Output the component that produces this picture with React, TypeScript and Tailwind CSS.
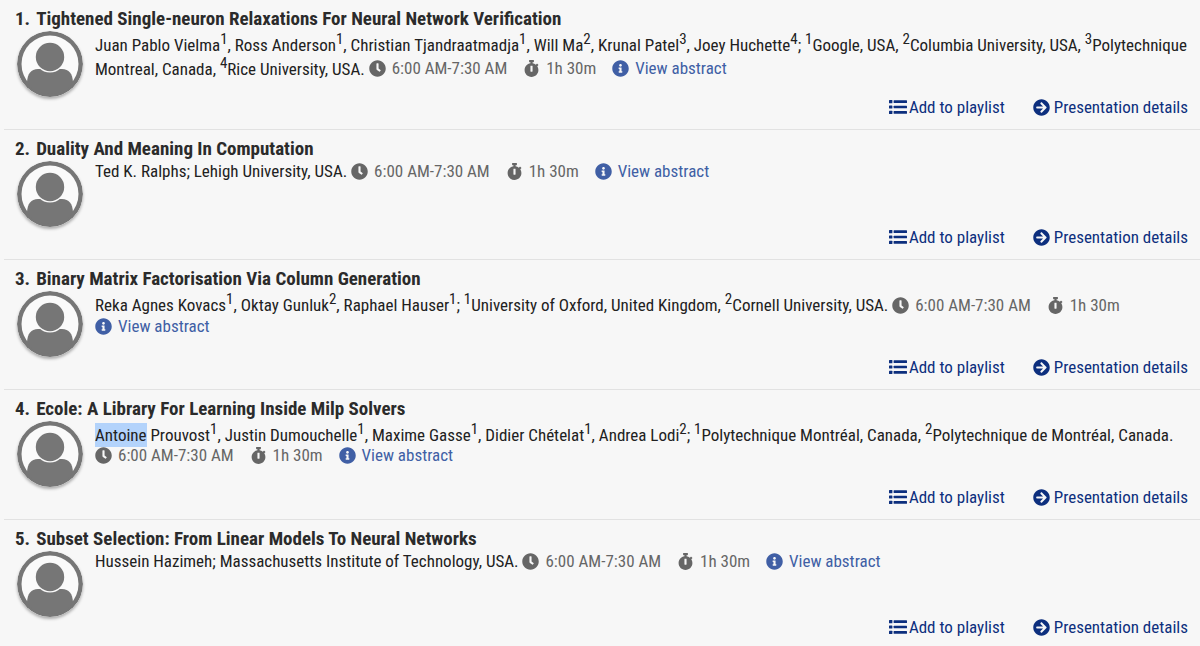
import React, { Fragment } from "react";
import {
  FaArrowCircleRight,
  FaClock,
  FaInfoCircle,
  FaStopwatch,
} from "react-icons/fa";

interface Entry {
  name: string;
  marker?: number;
}

interface Presentation {
  title: string;
  authors: Entry[];
  affiliations: Entry[];
  highlight?: string;
}

const presentations: Presentation[] = [
  {
    title: "Tightened Single-neuron Relaxations For Neural Network Verification",
    authors: [
      { name: "Juan Pablo Vielma", marker: 1 },
      { name: "Ross Anderson", marker: 1 },
      { name: "Christian Tjandraatmadja", marker: 1 },
      { name: "Will Ma", marker: 2 },
      { name: "Krunal Patel", marker: 3 },
      { name: "Joey Huchette", marker: 4 },
    ],
    affiliations: [
      { name: "Google, USA", marker: 1 },
      { name: "Columbia University, USA", marker: 2 },
      { name: "Polytechnique Montreal, Canada", marker: 3 },
      { name: "Rice University, USA", marker: 4 },
    ],
  },
  {
    title: "Duality And Meaning In Computation",
    authors: [{ name: "Ted K. Ralphs" }],
    affiliations: [{ name: "Lehigh University, USA" }],
  },
  {
    title: "Binary Matrix Factorisation Via Column Generation",
    authors: [
      { name: "Reka Agnes Kovacs", marker: 1 },
      { name: "Oktay Gunluk", marker: 2 },
      { name: "Raphael Hauser", marker: 1 },
    ],
    affiliations: [
      { name: "University of Oxford, United Kingdom", marker: 1 },
      { name: "Cornell University, USA", marker: 2 },
    ],
  },
  {
    title: "Ecole: A Library For Learning Inside Milp Solvers",
    highlight: "Antoine",
    authors: [
      { name: "Antoine Prouvost", marker: 1 },
      { name: "Justin Dumouchelle", marker: 1 },
      { name: "Maxime Gasse", marker: 1 },
      { name: "Didier Chételat", marker: 1 },
      { name: "Andrea Lodi", marker: 2 },
    ],
    affiliations: [
      { name: "Polytechnique Montréal, Canada", marker: 1 },
      { name: "Polytechnique de Montréal, Canada", marker: 2 },
    ],
  },
  {
    title: "Subset Selection: From Linear Models To Neural Networks",
    authors: [{ name: "Hussein Hazimeh" }],
    affiliations: [{ name: "Massachusetts Institute of Technology, USA" }],
  },
];

const Marker = ({ value }: { value?: number }) =>
  value ? (
    <sup className="static align-super text-[15px] leading-4">{value}</sup>
  ) : null;

const Name = ({ name, highlight }: { name: string; highlight?: string }) => {
  if (!highlight || !name.startsWith(highlight)) return <>{name}</>;
  return (
    <>
      <mark className="bg-[#b3d3fb] py-0.5 text-inherit">{highlight}</mark>
      {name.slice(highlight.length)}
    </>
  );
};

const ListIcon = () => (
  <svg viewBox="0 0 18 18" className="h-[18px] w-[18px]" fill="currentColor">
    <rect x="0" y="2" width="3.4" height="3.2" rx="0.5" />
    <rect x="0" y="7.4" width="3.4" height="3.2" rx="0.5" />
    <rect x="0" y="12.8" width="3.4" height="3.2" rx="0.5" />
    <rect x="4.6" y="2.3" width="13.4" height="2.6" rx="0.5" />
    <rect x="4.6" y="7.7" width="13.4" height="2.6" rx="0.5" />
    <rect x="4.6" y="13.1" width="13.4" height="2.6" rx="0.5" />
  </svg>
);

const Avatar = () => (
  <svg
    viewBox="0 0 66 66"
    className="h-[66px] w-[66px] shrink-0 rounded-full shadow-[0_2px_3px_rgba(0,0,0,0.3)]"
    role="img"
    aria-label="Presenter"
  >
    <circle cx="33" cy="33" r="33" fill="#767676" />
    <circle cx="33" cy="33" r="28.5" fill="#fafafa" />
    <path
      d="M10 51C10.500 43 14 38 21 38H45C52 38 55.500 43 56 51L50 59Q33 67 16 59Z"
      fill="#767676"
    />
    <circle cx="33" cy="26" r="15.4" fill="#fafafa" />
    <circle cx="33" cy="26" r="14.2" fill="#767676" />
  </svg>
);

const PresentationItem = ({
  item,
  index,
}: {
  item: Presentation;
  index: number;
}) => (
  <li className="flex min-h-[130px] flex-col border-b border-[#e2e2e2] pt-2 pr-3 pb-3 pl-[11px]">
    <h2 className="mb-0.5 flex gap-1.5 text-[19px] leading-[21px] font-bold text-[#2b2b2b]">
      <span>{index + 1}.</span>
      {item.title}
    </h2>

    <div className="flex items-start gap-3 pl-0.5">
      <Avatar />
      <p className="min-w-0 flex-1 leading-5">
        {item.authors.map((author, i) => (
          <Fragment key={author.name}>
            {i > 0 && ", "}
            <Name name={author.name} highlight={item.highlight} />
            <Marker value={author.marker} />
          </Fragment>
        ))}
        {"; "}
        {item.affiliations.map((place, i) => (
          <Fragment key={place.name}>
            {i > 0 && ", "}
            <Marker value={place.marker} />
            {place.name}
          </Fragment>
        ))}
        {". "}
        <span className="mr-3 whitespace-nowrap text-[#666]">
          <FaClock className="mr-1.5 mb-0.5 inline" />
          6:00 AM-7:30 AM
        </span>{" "}
        <span className="mr-3 whitespace-nowrap text-[#666]">
          <FaStopwatch className="mr-1.5 mb-0.5 inline" />
          1h 30m
        </span>{" "}
        <a href="#abstract" className="whitespace-nowrap text-[#405fa5]">
          <FaInfoCircle className="mr-1.5 mb-0.5 inline" />
          View abstract
        </a>
      </p>
    </div>

    <div className="mt-auto flex justify-end gap-7 leading-5 text-[#0d2f7e]">
      <button type="button" className="flex items-center gap-0.5">
        <ListIcon />
        Add to playlist
      </button>
      <a href="#details" className="flex items-center gap-1">
        <FaArrowCircleRight />
        Presentation details
      </a>
    </div>
  </li>
);

const App = () => {
  return (
    <main className="bg-[#f7f7f7] pl-1 font-['Roboto_Condensed','Roboto',sans-serif] text-[17px] text-[#212121]">
      <ol>
        {presentations.map((item, index) => (
          <PresentationItem key={item.title} item={item} index={index} />
        ))}
      </ol>
    </main>
  );
};

export default App;
